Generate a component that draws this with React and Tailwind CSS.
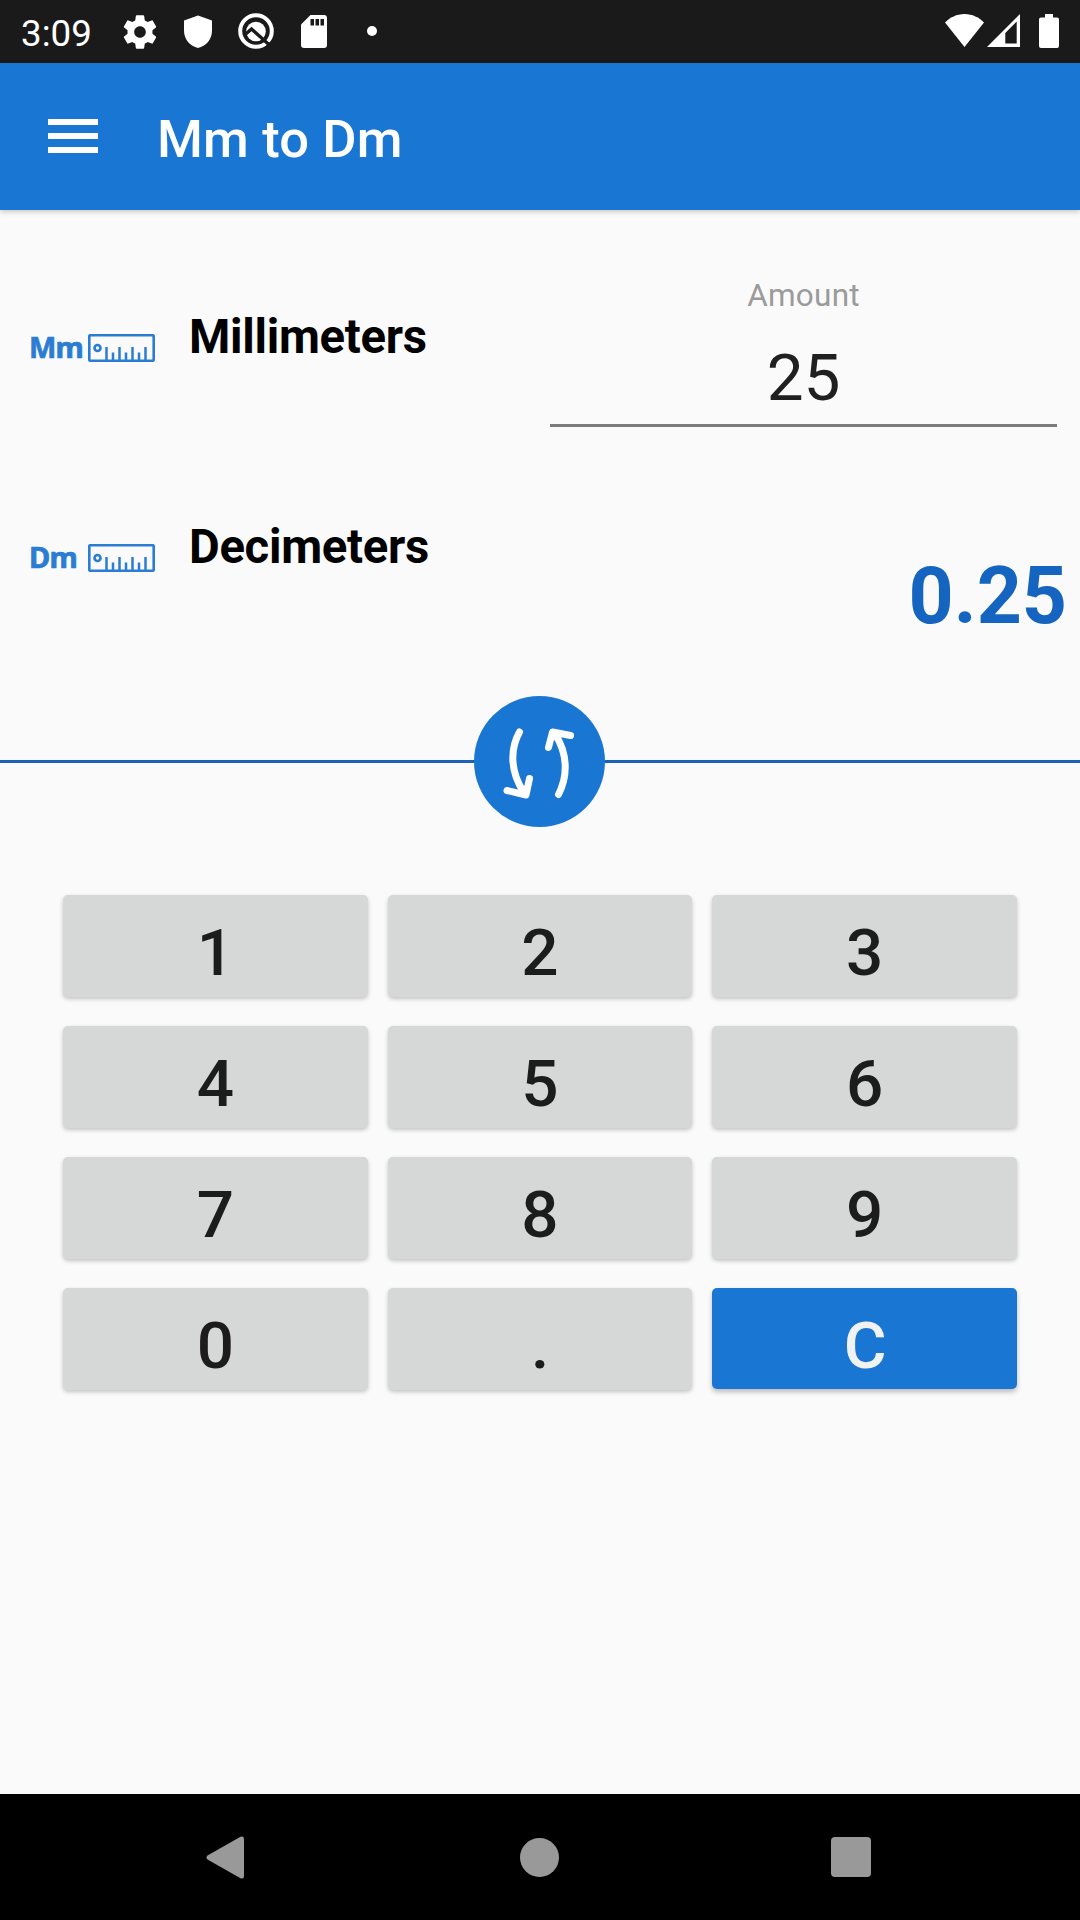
import React from "react";

function StatusBar() {
  return (
    <div className="flex h-[63px] items-start bg-[#1a1a1a] text-white">
      <span className="ml-[21px] mt-[14px] w-[72px] whitespace-nowrap text-[36.75px] leading-[40px]">3:09</span>
      <svg className="ml-[27px] mt-[11.5px] h-10 w-10" viewBox="0 0 24 24" fill="currentColor">
        <path d="M19.43 12.98c.04-.32.07-.64.07-.98s-.03-.66-.07-.98l2.11-1.65c.19-.15.24-.42.12-.64l-2-3.46c-.12-.22-.39-.3-.61-.22l-2.49 1c-.52-.4-1.08-.73-1.69-.98l-.38-2.65C14.46 2.18 14.25 2 14 2h-4c-.25 0-.46.18-.49.42l-.38 2.65c-.61.25-1.17.59-1.69.98l-2.49-1c-.23-.09-.49 0-.61.22l-2 3.46c-.13.22-.07.49.12.64l2.11 1.65c-.04.32-.07.65-.07.98s.03.66.07.98l-2.11 1.65c-.19.15-.24.42-.12.64l2 3.46c.12.22.39.3.61.22l2.49-1c.52.4 1.08.73 1.69.98l.38 2.65c.03.24.24.42.49.42h4c.25 0 .46-.18.49-.42l.38-2.65c.61-.25 1.17-.59 1.69-.98l2.49 1c.23.09.49 0 .61-.22l2-3.46c.12-.22.07-.49-.12-.64l-2.11-1.65zM12 15.5c-1.93 0-3.5-1.57-3.5-3.5s1.57-3.5 3.5-3.5 3.5 1.57 3.5 3.5-1.57 3.5-3.5 3.5z" />
      </svg>
      <svg className="ml-6 mt-[15px] h-[33px] w-7" viewBox="0 0 28 33" fill="currentColor">
        <path d="M14 0.500L28 5.500V15.500C28 24.500 22 31 14 33C6 31 0 24.500 0 15.500V5.500Z" />
      </svg>
      <svg className="ml-[26px] mt-[13px] h-[37px] w-9" viewBox="0 0 36 37" fill="none">
        <circle cx="18" cy="18" r="15.800" stroke="currentColor" strokeWidth="4" />
        <circle cx="18" cy="18.500" r="9.800" fill="currentColor" />
        <path d="M6 22.500L13.500 16L32 32.500" stroke="#1a1a1a" strokeWidth="3.400" />
        <path d="M28 34.500L34.500 28" stroke="#1a1a1a" strokeWidth="2" />
      </svg>
      <svg className="ml-[27px] mt-[15px] h-[33px] w-[26px]" viewBox="0 0 26 33">
        <path d="M9.500 0H23Q26 0 26 3V30Q26 33 23 33H3Q0 33 0 30V9.500Z" fill="currentColor" />
        <path d="M9.500 4h3.500v6.500H9.500zM14.500 4H18v6.500h-3.500zM19.500 4H23v6.500h-3.500z" fill="#1a1a1a" />
      </svg>
      <span className="ml-10 mt-[26px] h-[10px] w-[10px] rounded-full bg-white" />
      <div className="ml-auto mr-[21px] mt-[14px] flex">
        <svg className="h-[33px] w-[39px]" viewBox="0 0 39 33" fill="currentColor">
          <path d="M19.500 33L0 8.500C5 3.500 11.500 0 19.500 0S34 3.500 39 8.500Z" />
        </svg>
        <svg className="ml-[3px] h-[33px] w-[33px]" viewBox="0 0 33 33" fill="currentColor" fillRule="evenodd">
          <path d="M33 0V33H0ZM29.700 7.500L18.300 18.900V29.500H29.700Z" />
        </svg>
        <svg className="ml-[19px] h-[34px] w-5" viewBox="0 0 20 34" fill="currentColor">
          <path d="M6 0H14V3.500H18Q20 3.500 20 5.500V32Q20 34 18 34H2Q0 34 0 32V5.500Q0 3.500 2 3.500H6Z" />
        </svg>
      </div>
    </div>
  );
}

function AppBar() {
  return (
    <header className="z-10 flex h-[147px] items-start bg-[#1976d2] text-white shadow-[0_2px_5px_rgba(0,0,0,0.2)]">
      <button aria-label="Menu" className="ml-12 mt-14 flex w-[50px] flex-col gap-[8.700px]">
        <span className="h-[5.500px] w-full bg-white" />
        <span className="h-[5.500px] w-full bg-white" />
        <span className="h-[5.500px] w-full bg-white" />
      </button>
      <h1 className="ml-[59px] mt-[46px] text-[52.5px] font-medium leading-[60px] tracking-[0.15px]">Mm to Dm</h1>
    </header>
  );
}

function UnitIcon({ label }) {
  return (
    <div className="flex w-[127px] items-center text-[#2b7dd3]">
      <span className="mb-px ml-px w-[59px] whitespace-nowrap font-['Noto_Sans','Open_Sans',sans-serif] text-[29px] font-bold leading-[30px] tracking-[-0.8px] [-webkit-text-stroke:0.7px_#2b7dd3]">
        {label}
      </span>
      <svg className="h-7 w-[67px]" viewBox="0 0 67 28" fill="none" stroke="currentColor">
        <rect x="1.250" y="1.250" width="64.500" height="25.500" rx="1.500" strokeWidth="2.700" />
        <circle cx="9.500" cy="14" r="3" strokeWidth="2.600" />
        <path d="M18.500 13V26M31.500 13V26M44.500 13V26M57.500 13V26M25 18.500V26M38 18.500V26M51 18.500V26" strokeWidth="2.500" />
      </svg>
    </div>
  );
}

function UnitRow({ icon, name, children }) {
  return (
    <div className="flex h-[210px] items-start">
      <div className="ml-7 mt-[62px]">
        <UnitIcon label={icon} />
      </div>
      <span className="ml-[34px] mt-[39px] w-[361px] text-[47.25px] font-bold leading-[56px] tracking-[-0.3px] text-black">
        {name}
      </span>
      {children}
    </div>
  );
}

function SwapDivider() {
  return (
    <div className="flex items-center">
      <span className="h-[3px] w-[474px] bg-[#1a62b8]" />
      <button aria-label="Swap units" className="h-[131px] w-[131px] rounded-full bg-[#1976d2]">
        <svg viewBox="0 0 131 131" fill="none" stroke="#fff" strokeWidth="7" strokeLinecap="round" strokeLinejoin="round">
          <path d="M45.500 36C36 53 36 75 49.500 96M33 94.500L52 99L55.500 82.500" />
          <path d="M84.500 98.500C94 80 94 58 81 38M74.500 51.500L78.500 36L96.500 39.500" />
        </svg>
      </button>
      <span className="h-[3px] flex-1 bg-[#1a62b8]" />
    </div>
  );
}

const KEYS = ["1", "2", "3", "4", "5", "6", "7", "8", "9", "0", "."];

function Keypad() {
  return (
    <div className="ml-[63px] mt-[68px] grid w-[954px] grid-cols-3 gap-x-5 gap-y-[29px] text-[65.6px] font-medium leading-[76px] text-[#1c1c1c]">
      {KEYS.map((k) => (
        <button key={k} className="h-[102px] rounded-[5px] bg-[#d6d7d7] pt-[13px] shadow-[0_2px_4px_rgba(0,0,0,0.22)]">
          {k}
        </button>
      ))}
      <button className="h-[101px] rounded-[5px] bg-[#1976d2] pl-px pt-[14px] text-[#f0f2f4] shadow-[0_3px_5px_rgba(0,0,0,0.25)]">
        C
      </button>
    </div>
  );
}

function NavBar() {
  return (
    <nav className="mt-auto flex h-[126px] items-center bg-black text-[#999999]">
      <svg className="ml-[206px] h-[43px] w-[38px]" viewBox="0 0 38 43" fill="currentColor">
        <path d="M1.500 19.500L34.500 0.800Q38 -0.500 38 3V40Q38 43.500 34.500 42.200L1.500 23.500Q-0.500 21.500 1.500 19.500Z" />
      </svg>
      <span className="ml-[276px] h-[39px] w-[39px] rounded-full bg-[#999999]" />
      <span className="ml-[272px] h-10 w-10 rounded-[4px] bg-[#999999]" />
    </nav>
  );
}

export default function App() {
  return (
    <div className="flex h-[1920px] w-[1080px] flex-col overflow-hidden bg-[#fafafa] font-[Roboto,sans-serif]">
      <StatusBar />
      <AppBar />
      <main className="pt-[60px]">
        <UnitRow icon="Mm" name="Millimeters">
          <div className="w-[507px] border-b-[3px] border-[#7b7b7b] text-center">
            <div className="mt-2 text-[31.5px] leading-9 tracking-[0.25px] text-[#9b9b9b]">Amount</div>
            <div className="mb-[8px] mt-[26px] text-[65.6px] leading-[76px] text-[#202020]">25</div>
          </div>
        </UnitRow>
        <UnitRow icon="Dm" name="Decimeters">
          <span className="ml-auto mr-[13px] mt-[70px] text-[78.75px] font-bold leading-[92px] text-[#1565c0]">0.25</span>
        </UnitRow>
        <div className="mt-1.5">
          <SwapDivider />
        </div>
        <Keypad />
      </main>
      <NavBar />
    </div>
  );
}
